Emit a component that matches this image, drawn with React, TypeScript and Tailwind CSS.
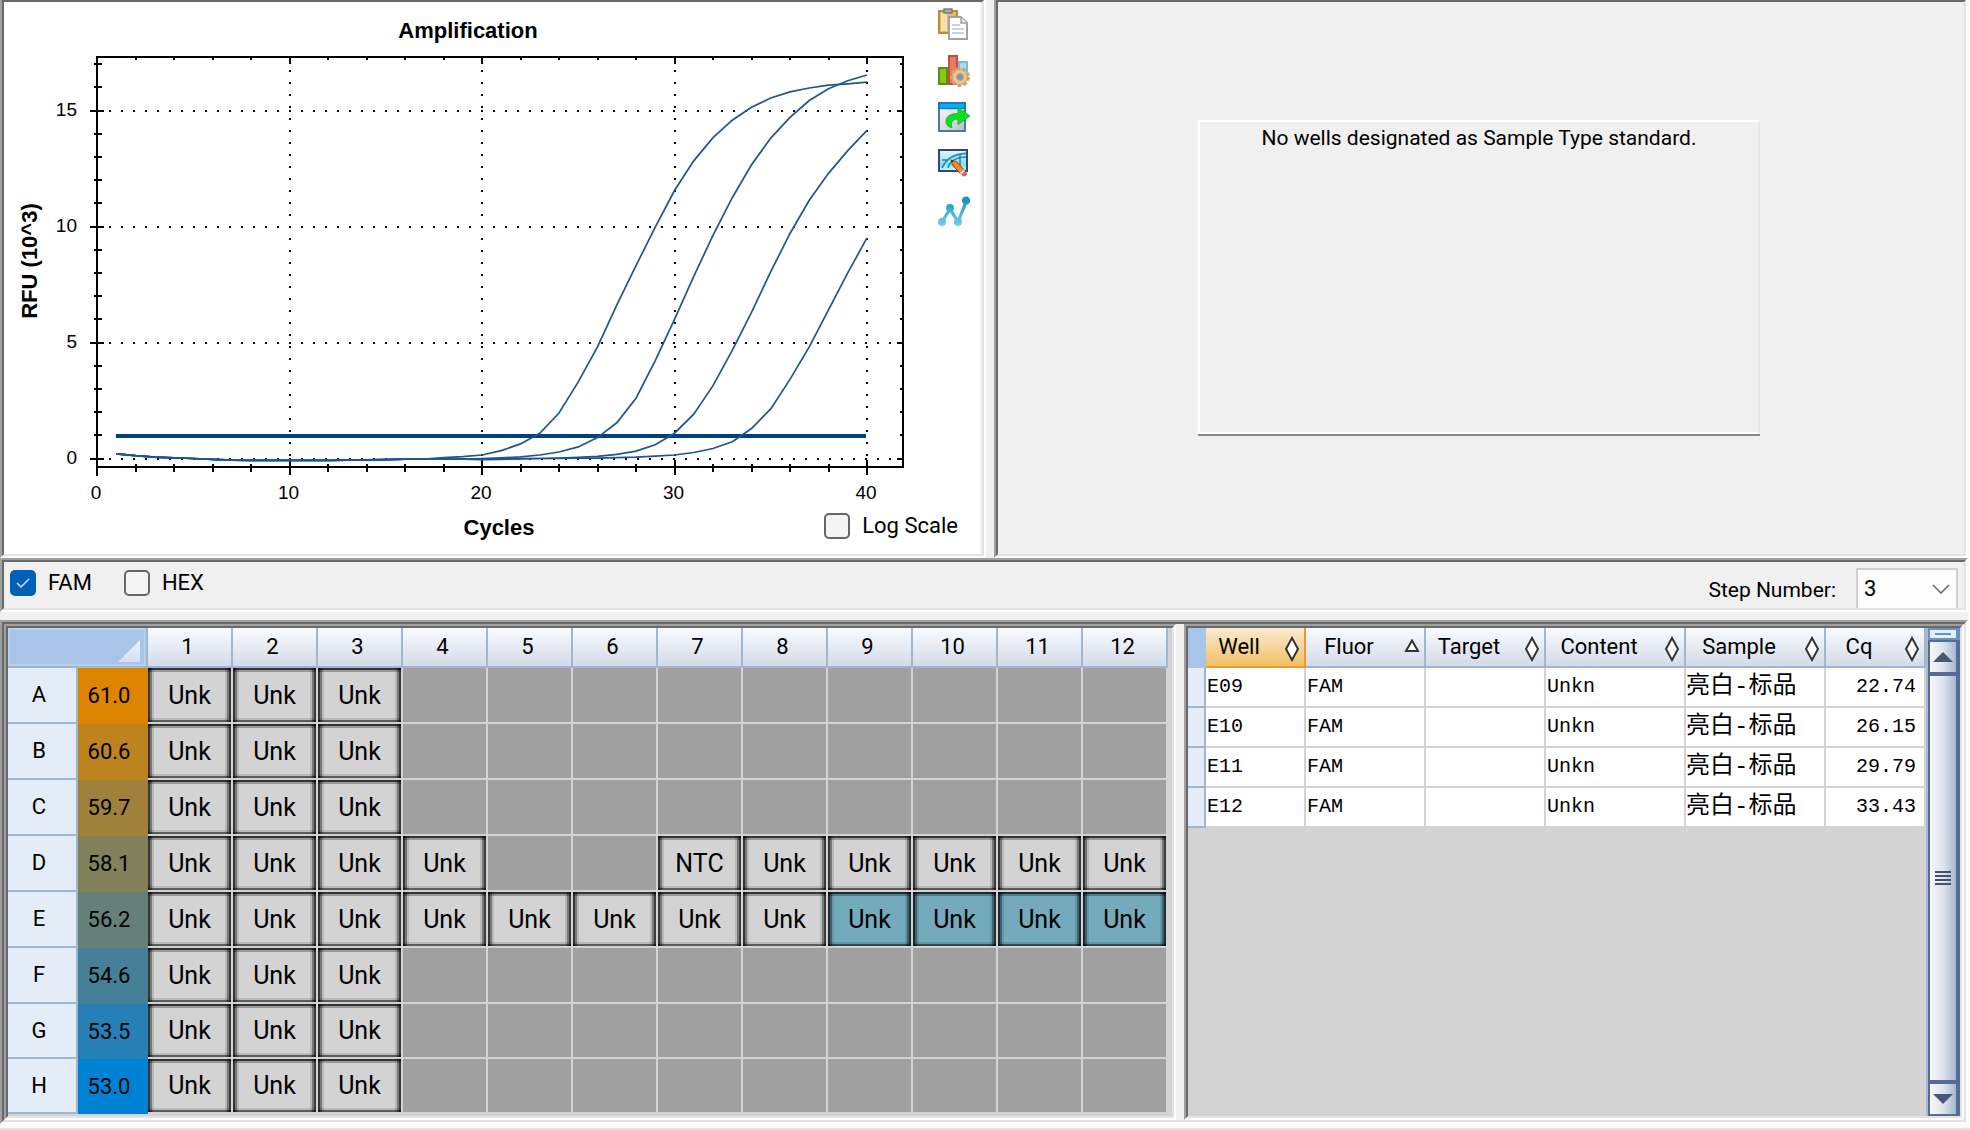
import { useState } from "react";
import type { ReactNode } from "react";
import clsx from "clsx";

const COLUMNS = [1, 2, 3, 4, 5, 6, 7, 8, 9, 10, 11, 12];

const PLATE = [
  { row: "A", temp: "61.0", color: "bg-[#dd8500]", wells: "UUU........." },
  { row: "B", temp: "60.6", color: "bg-[#bd831f]", wells: "UUU........." },
  { row: "C", temp: "59.7", color: "bg-[#a0813c]", wells: "UUU........." },
  { row: "D", temp: "58.1", color: "bg-[#82815a]", wells: "UUUU..NUUUUU" },
  { row: "E", temp: "56.2", color: "bg-[#658078]", wells: "UUUUUUUUSSSS" },
  { row: "F", temp: "54.6", color: "bg-[#468096]", wells: "UUU........." },
  { row: "G", temp: "53.5", color: "bg-[#2680b6]", wells: "UUU........." },
  { row: "H", temp: "53.0", color: "bg-[#0082d4]", wells: "UUU........." },
];

const RESULTS = [
  { well: "E09", fluor: "FAM", target: "", content: "Unkn", sample: "亮白-标品", cq: "22.74" },
  { well: "E10", fluor: "FAM", target: "", content: "Unkn", sample: "亮白-标品", cq: "26.15" },
  { well: "E11", fluor: "FAM", target: "", content: "Unkn", sample: "亮白-标品", cq: "29.79" },
  { well: "E12", fluor: "FAM", target: "", content: "Unkn", sample: "亮白-标品", cq: "33.43" },
];

const HEADERS = [
  { label: "Well", width: "w-[100px]", sort: "both" },
  { label: "Fluor", width: "w-[120px]", sort: "asc" },
  { label: "Target", width: "w-[120px]", sort: "both" },
  { label: "Content", width: "w-[140px]", sort: "both" },
  { label: "Sample", width: "w-[140px]", sort: "both" },
  { label: "Cq", width: "w-[100px]", sort: "both" },
];

// RFU (10^3), each curve ends at cycle 40
const BASELINE = [0.2, 0.12, 0.06, 0.03, 0, -0.04, -0.07, -0.08, -0.08, -0.08, -0.08, -0.08, -0.07, -0.06, -0.05, -0.03, 0];
const CURVES = [
  [0.04, 0.08, 0.15, 0.34, 0.63, 1.09, 1.96, 3.3, 4.81, 6.61, 8.31, 9.97, 11.55, 12.83, 13.83, 14.58, 15.14, 15.54, 15.8, 15.97, 16.09, 16.15, 16.22],
  [0, 0.03, 0.07, 0.15, 0.28, 0.5, 0.9, 1.54, 2.6, 4.22, 6, 7.85, 9.62, 11.24, 12.66, 13.81, 14.7, 15.43, 15.94, 16.28, 16.53],
  [-0.03, -0.02, 0, 0, 0.02, 0.05, 0.09, 0.18, 0.32, 0.59, 1.09, 1.91, 3.14, 4.66, 6.3, 8.05, 9.7, 11.13, 12.29, 13.27, 14.14],
  [-0.05, -0.04, -0.02, 0, 0, 0.01, 0.02, 0.04, 0.06, 0.1, 0.15, 0.26, 0.43, 0.72, 1.29, 2.14, 3.41, 4.81, 6.41, 8, 9.51],
];

const px = (cycle: number) => 97 + cycle * 19.25;
const py = (rfu: number) => 458.5 - rfu * 23.2;

function curvePoints(tail: number[]) {
  const start = 41 - tail.length;
  const points = [];
  for (let cycle = 1; cycle <= 40; cycle++) {
    const value =
      cycle >= start ? tail[cycle - start] : BASELINE[Math.min(cycle - 1, 15)];
    points.push(`${px(cycle)},${py(value)}`);
  }
  return points.join(" ");
}

function Sunken({
  children,
  className,
  flushTop,
}: {
  children: ReactNode;
  className?: string;
  flushTop?: boolean;
}) {
  return (
    <div
      className={clsx(
        "flex min-w-0 border-2 border-t-[#a0a0a0] border-r-white border-b-white border-l-[#a0a0a0]",
        flushTop && "border-t-0"
      )}
    >
      <div
        className={clsx(
          "min-w-0 flex-1 border-2 border-t-[#696969] border-r-[#e3e3e3] border-b-[#e3e3e3] border-l-[#696969]",
          className
        )}
      >
        {children}
      </div>
    </div>
  );
}

function Check({
  label,
  checked,
  onChange,
}: {
  label: string;
  checked: boolean;
  onChange: (value: boolean) => void;
}) {
  return (
    <label className="flex items-center gap-3">
      <span className="relative flex">
        <input
          type="checkbox"
          checked={checked}
          onChange={(e) => onChange(e.target.checked)}
          className="size-[26px] appearance-none rounded-[5px] border-2 border-[#666] bg-[#f4f4f4] checked:border-[#005fb8] checked:bg-[#005fb8]"
        />
        {checked && (
          <svg viewBox="0 0 26 26" className="pointer-events-none absolute inset-0 size-[26px]">
            <path d="M7 13l4 4 8-8" fill="none" stroke="#cfe2f5" strokeWidth="1.5" />
          </svg>
        )}
      </span>
      <span>{label}</span>
    </label>
  );
}

function AmplificationChart() {
  const xMinor = [2, 4, 6, 8, 12, 14, 16, 18, 22, 24, 26, 28, 32, 34, 36, 38];
  const yMinor = [1, 2, 3, 4, 6, 7, 8, 9, 11, 12, 13, 14, 16, 17];

  return (
    <svg
      viewBox="4 2 928 552"
      className="h-[552px] min-w-0 flex-1 font-['Liberation_Sans',sans-serif]"
      role="img"
      aria-label="Amplification"
    >
      <g stroke="#000" strokeWidth="2" shapeRendering="crispEdges" fill="none">
        <rect x="97" y="57" width="806" height="410" />
        {[0, 5, 10, 15].map((v) => (
          <g key={v}>
            <path d={`M109 ${py(v)}H903`} strokeDasharray="2 10" />
            <path d={`M90 ${py(v)}H104M897 ${py(v)}H903`} />
          </g>
        ))}
        {[10, 20, 30, 40].map((v) => (
          <g key={v}>
            <path d={`M${px(v)} 70V459`} strokeDasharray="2 10" />
            <path d={`M${px(v)} 57V64M${px(v)} 460V475`} />
          </g>
        ))}
        <path d="M97 466V476" />
        {xMinor.map((v) => (
          <path key={v} d={`M${px(v)} 57V60M${px(v)} 464V472`} />
        ))}
        {yMinor.map((v) => (
          <path key={v} d={`M94 ${py(v)}H102M900 ${py(v)}H903`} />
        ))}
      </g>

      <path d="M116 436H866" stroke="#004080" strokeWidth="4" />
      {CURVES.map((curve, i) => (
        <polyline
          key={i}
          points={curvePoints(curve)}
          fill="none"
          stroke="#1f5590"
          strokeWidth="1.7"
        />
      ))}

      <g fontSize="19" textAnchor="middle">
        {[0, 10, 20, 30, 40].map((v) => (
          <text key={v} x={px(v) - 1} y="499">
            {v}
          </text>
        ))}
      </g>
      <g fontSize="19" textAnchor="end">
        {[0, 5, 10, 15].map((v) => (
          <text key={v} x="77" y={py(v) + 5}>
            {v}
          </text>
        ))}
      </g>
      <g fontSize="22" fontWeight="bold" textAnchor="middle">
        <text x="468" y="38">
          Amplification
        </text>
        <text x="499" y="535">
          Cycles
        </text>
        <text transform="translate(37 261) rotate(-90)">RFU (10^3)</text>
      </g>
    </svg>
  );
}

function CopyIcon() {
  return (
    <svg viewBox="0 0 16 16" className="size-8">
      <rect x="0.5" y="1.5" width="9" height="11" fill="#e2bd6c" stroke="#b98a3e" />
      <rect x="1.5" y="2.5" width="3" height="9" fill="#f3dfae" />
      <rect x="3" y="0.5" width="4" height="2" fill="#aaa" stroke="#777" strokeWidth="0.7" />
      <path d="M5.5 4.5h6l3 3v8h-9z" fill="#fff" stroke="#a2a2a2" />
      <path d="M11.5 4.5v3h3" fill="#e8e8e8" stroke="#a2a2a2" strokeWidth="0.8" />
      <path d="M7 8.5h4M7 10.5h6M7 12.5h6" stroke="#c4d3e5" strokeWidth="0.9" />
    </svg>
  );
}

function SettingsIcon() {
  return (
    <svg viewBox="0 0 16 16" className="size-8">
      <rect x="0.5" y="6.5" width="4" height="8" fill="#8cc51c" stroke="#5f8f10" />
      <rect x="5.5" y="0.5" width="4" height="14" fill="#ea7a68" stroke="#c4503f" />
      <rect x="10.5" y="3.5" width="4" height="6" fill="#a9dcf0" stroke="#7fbdd6" />
      <circle cx="11" cy="11" r="4.2" fill="#dcb57e" stroke="#d0a468" strokeWidth="1.6" strokeDasharray="1.7 1.3" />
      <circle cx="11" cy="11" r="3.4" fill="#e8c797" />
      <circle cx="11" cy="11" r="1.6" fill="#6d9ac0" stroke="#c1996a" strokeWidth="0.6" />
    </svg>
  );
}

function ExportIcon() {
  return (
    <svg viewBox="0 0 16 16" className="size-8">
      <defs>
        <linearGradient id="export-bg" x2="1" y2="1">
          <stop stopColor="#fff" />
          <stop offset="1" stopColor="#bcbcc8" />
        </linearGradient>
      </defs>
      <rect x="0.5" y="0.5" width="13" height="14" fill="url(#export-bg)" stroke="#5674a2" />
      <rect x="0" y="0" width="14" height="3.6" fill="#1479bd" />
      <rect x="1" y="0.9" width="12" height="2" fill="#05b0f4" />
      <path d="M4.2 8.5C5 6.5 7 5.8 10 5.8V2.8L16 7l-6 4.3V8.5C7.5 8.5 6 10 7 12.8 4.5 12.5 3.5 10.5 4.2 8.5z" fill="#08e020" stroke="#10b030" strokeWidth="0.4" />
    </svg>
  );
}

function EditImageIcon() {
  return (
    <svg viewBox="0 0 16 16" className="size-8">
      <defs>
        <linearGradient id="edit-bg" x2="0" y2="1">
          <stop stopColor="#e6f7fb" />
          <stop offset="0.7" stopColor="#7fdff0" />
          <stop offset="1" stopColor="#e6f7fb" />
        </linearGradient>
      </defs>
      <rect x="0.5" y="0.5" width="14" height="10.5" fill="url(#edit-bg)" stroke="#33457f" />
      <path d="M2 9.5C4 5 8 2.5 14 2.2M5 9.5C6 6 9 4 14 4M2 5.5h3M11 2.5v7" fill="none" stroke="#2788a8" strokeWidth="0.8" />
      <path d="M6.5 5.5l2.8.8 4 4.4-2 1.8-4-4.4z" fill="#f58a1c" stroke="#8a4a18" strokeWidth="0.5" />
      <path d="M6.5 5.5l1.5.4-1.1 1z" fill="#333" />
      <path d="M13.3 10.7l1.2 1.3c.4 1-1 2-1.9 1.6l-1.3-1.2z" fill="#d45a70" />
      <path d="M12.8 10.2l-2 1.8.8.8 2-1.8z" fill="#ddd" />
    </svg>
  );
}

function CurveIcon() {
  return (
    <svg viewBox="0 0 16 16" className="size-8">
      <defs>
        <linearGradient id="curve-fill" x2="0" y2="16" gradientUnits="userSpaceOnUse">
          <stop stopColor="#0b8fb8" />
          <stop offset="1" stopColor="#7fd3ec" />
        </linearGradient>
      </defs>
      <path d="M2 13L6 6.5l4 6.5L14 3" fill="none" stroke="url(#curve-fill)" strokeWidth="1.6" />
      <g fill="url(#curve-fill)">
        <circle cx="2" cy="13" r="2" />
        <circle cx="6" cy="6" r="2" />
        <circle cx="10" cy="13" r="2" />
        <circle cx="14" cy="2.3" r="2.1" />
      </g>
    </svg>
  );
}

const TOOLS = [
  { name: "Copy", Icon: CopyIcon },
  { name: "Chart settings", Icon: SettingsIcon },
  { name: "Export", Icon: ExportIcon },
  { name: "Edit image", Icon: EditImageIcon },
  { name: "Curves", Icon: CurveIcon },
];

function Well({ code }: { code: string }) {
  if (code === ".") {
    return <td className="border-r-2 border-b-2 border-[#d3d3d3] bg-[#a0a0a0]" />;
  }
  return (
    <td className="h-1 border-r-2 border-b-2 border-[#d3d3d3] p-0">
      <button
        className={clsx(
          "block h-full w-full text-[25px] leading-none shadow-[inset_0_2px_0_rgba(0,0,0,0.65),inset_2px_0_0_rgba(0,0,0,0.55),inset_-2px_0_0_rgba(0,0,0,0.5),inset_0_-2px_0_rgba(0,0,0,0.5),inset_0_4px_0_rgba(0,0,0,0.28),inset_4px_0_0_rgba(0,0,0,0.35),inset_-4px_0_0_rgba(0,0,0,0.35),inset_0_-4px_0_rgba(0,0,0,0.12),inset_6px_0_0_rgba(0,0,0,0.12),inset_-6px_0_0_rgba(0,0,0,0.12)]",
          code === "S" ? "bg-[#73abbd]" : "bg-[#d3d3d3]"
        )}
      >
        {code === "N" ? "NTC" : "Unk"}
      </button>
    </td>
  );
}

function PlateView() {
  return (
    <table className="w-full table-fixed border-separate border-spacing-0 text-center">
      <thead>
        <tr className="h-10">
          <th
            colSpan={2}
            className="w-[140px] border-r-2 border-b-2 border-[#9eb6ce] bg-[#a9c4e9] p-0 shadow-[inset_0_0_0_2px_#b9cfe6]"
          >
            <svg viewBox="0 0 22 22" className="mt-2 mr-1.5 ml-auto size-[22px]">
              <defs>
                <linearGradient id="corner" x2="0" y2="1">
                  <stop stopColor="#f0f5fc" />
                  <stop offset="1" stopColor="#cfdff4" />
                </linearGradient>
              </defs>
              <path d="M22 0V22H0z" fill="url(#corner)" />
            </svg>
          </th>
          {COLUMNS.map((n) => (
            <th
              key={n}
              className="border-r-2 border-b-2 border-[#9eb6ce] bg-linear-to-b from-[#f9fbfd] to-[#d3dbe9] p-0 pr-1 font-normal"
            >
              {n}
            </th>
          ))}
        </tr>
      </thead>
      <tbody>
        {PLATE.map(({ row, temp, color, wells }, i) => (
          <tr key={row} className={i < 6 ? "h-14" : "h-[55px]"}>
            <th className="border-r-2 border-b-2 border-[#9eb6ce] bg-[#e4ecf7] p-0 pr-1.5 font-normal">
              {row}
            </th>
            <td className={clsx("p-0 pr-2", color)}>{temp}</td>
            {wells.split("").map((code, col) => (
              <Well key={col} code={code} />
            ))}
          </tr>
        ))}
      </tbody>
    </table>
  );
}

function SortIcon({ sort }: { sort: string }) {
  return (
    <svg viewBox="0 0 16 26" className="h-[26px] w-4" fill="#fff" stroke="#333" strokeWidth="2">
      {sort === "asc" ? (
        <path d="M8 4.5L14 15H2z" />
      ) : (
        <path d="M8 2l6 11-6 11-6-11z" />
      )}
    </svg>
  );
}

function ResultsTable() {
  const cell = "border-r-2 border-b-2 border-[#d3d3d3] bg-white py-0";

  return (
    <table className="w-full table-fixed border-separate border-spacing-0">
      <thead>
        <tr className="h-10">
          <th className="w-[18px] bg-[#a9c4e9] p-0" />
          {HEADERS.map(({ label, width, sort }, i) => (
            <th
              key={label}
              className={clsx(
                "border-r-2 border-b-2 bg-linear-to-b p-0 font-normal",
                width,
                i === 0
                  ? "border-[#f29536] from-[#fbe9cf] to-[#f1c15f]"
                  : "border-[#9eb6ce] from-[#f9fbfd] to-[#d3dbe9]"
              )}
            >
              <div className="flex items-center">
                <span className="flex-1 pr-2 text-center">{label}</span>
                <button aria-label={`Sort by ${label}`} className="flex w-6 justify-center pt-1">
                  <SortIcon sort={sort} />
                </button>
              </div>
            </th>
          ))}
        </tr>
      </thead>
      <tbody className="font-['Liberation_Mono','Noto_Sans_CJK_SC',monospace] text-xl">
        {RESULTS.map((r) => (
          <tr key={r.well} className="h-10">
            <th className="border-r-2 border-b-2 border-[#9eb6ce] bg-[#e4ecf7] p-0" />
            <td className={clsx(cell, "px-px")}>{r.well}</td>
            <td className={clsx(cell, "px-px")}>{r.fluor}</td>
            <td className={clsx(cell, "px-px")}>{r.target}</td>
            <td className={clsx(cell, "px-px")}>{r.content}</td>
            <td className={clsx(cell, "px-0 text-2xl leading-none")}>{r.sample}</td>
            <td className={clsx(cell, "pr-2 text-right")}>{r.cq}</td>
          </tr>
        ))}
      </tbody>
    </table>
  );
}

function ScrollBar() {
  const face = "bg-linear-to-r from-[#f7f8fb] via-[#dfe5ec] to-[#a5b8ce]";

  return (
    <div className="flex w-[34px] shrink-0 flex-col border-l-2 border-[#a9b9d2] bg-[#566b96]">
      <div className="h-3 bg-[#6a92ba] p-0.5 pr-1">
        <div className="flex h-2 items-center justify-center bg-[#e4f0fb]">
          <div className="h-0.5 w-4 bg-[#6a92ba]" />
        </div>
      </div>
      <button aria-label="Scroll up" className={clsx("mt-0.5 mr-1 ml-0.5 flex h-[30px] items-center justify-center", face)}>
        <svg viewBox="0 0 20 10" className="h-[10px] w-5">
          <path d="M10 0L20 10H0z" fill="#4a5878" />
        </svg>
      </button>
      <div className={clsx("mt-1 mr-1 ml-0.5 flex flex-1 flex-col items-center justify-center gap-0.5", face)}>
        <div className="h-0.5 w-4 bg-[#43506f]" />
        <div className="h-0.5 w-4 bg-[#43506f]" />
        <div className="h-0.5 w-4 bg-[#43506f]" />
        <div className="h-0.5 w-4 bg-[#43506f]" />
      </div>
      <button aria-label="Scroll down" className={clsx("mt-1 mr-1 mb-0.5 ml-0.5 flex h-[30px] items-center justify-center", face)}>
        <svg viewBox="0 0 20 10" className="h-[10px] w-5">
          <path d="M0 0H20L10 10z" fill="#4a5878" />
        </svg>
      </button>
    </div>
  );
}

export default function App() {
  const [logScale, setLogScale] = useState(false);
  const [fam, setFam] = useState(true);
  const [hex, setHex] = useState(false);
  const [step, setStep] = useState("3");

  return (
    <div className="flex min-h-screen flex-col border-b-2 border-[#e3e3e3] bg-[#f9f9f9] pr-0.5 font-[Roboto,'Noto_Sans_CJK_SC',sans-serif] text-[22px] leading-7 text-black">
      <div className="grid grid-cols-[986fr_974fr] gap-2 bg-[#f0f0f0]">
        <Sunken flushTop className="relative flex bg-white">
          <AmplificationChart />
          <div className="flex flex-col gap-[15px] border-r-2 border-[#f3f3f3] pt-[6px] pr-[10px] pl-[6px]">
            {TOOLS.map(({ name, Icon }) => (
              <button key={name} aria-label={name}>
                <Icon />
              </button>
            ))}
          </div>
          <div className="absolute right-6 bottom-[14px]">
            <Check label="Log Scale" checked={logScale} onChange={setLogScale} />
          </div>
        </Sunken>

        <Sunken flushTop className="flex items-start justify-center bg-[#f0f0f0] pt-[118px] pr-1">
          <div className="h-[316px] w-[562px] border-b-2 border-[#858585]">
            <p className="h-full border-2 border-white border-r-[#e8e8e8] pt-0.5 text-center text-[21px]">
              No wells designated as Sample Type standard.
            </p>
          </div>
        </Sunken>
      </div>

      <Sunken className="flex justify-between bg-[#f0f0f0]">
        <div className="flex items-start gap-8 pt-[7px] pl-[6px]">
          <Check label="FAM" checked={fam} onChange={setFam} />
          <Check label="HEX" checked={hex} onChange={setHex} />
        </div>
        <div className="flex items-end gap-5 pr-[6px]">
          <label htmlFor="step" className="pb-1 text-[21px]">
            Step Number:
          </label>
          <div className="relative">
            <select
              id="step"
              value={step}
              onChange={(e) => setStep(e.target.value)}
              className="mt-[6px] block h-10 w-[102px] appearance-none border-2 border-b-0 border-[#d0d0d0] bg-[#fdfdfd] pl-1.5"
            >
              <option>1</option>
              <option>2</option>
              <option>3</option>
            </select>
            <svg viewBox="0 0 18 10" className="pointer-events-none absolute right-2 bottom-[14px] h-[10px] w-[18px]">
              <path d="M1 1l8 8 8-8" fill="none" stroke="#666" strokeWidth="1.5" />
            </svg>
          </div>
        </div>
      </Sunken>

      <div className="bg-[#f0f0f0] pt-2">
        <Sunken className="grid grid-cols-[1172fr_780fr] gap-2 bg-[#f0f0f0]">
          <Sunken className="bg-[#d3d3d3] pr-1 pb-0.5">
            <PlateView />
          </Sunken>
          <Sunken className="flex bg-[#d3d3d3]">
            <div className="min-w-0 flex-1">
              <ResultsTable />
            </div>
            <ScrollBar />
          </Sunken>
        </Sunken>
      </div>
    </div>
  );
}
